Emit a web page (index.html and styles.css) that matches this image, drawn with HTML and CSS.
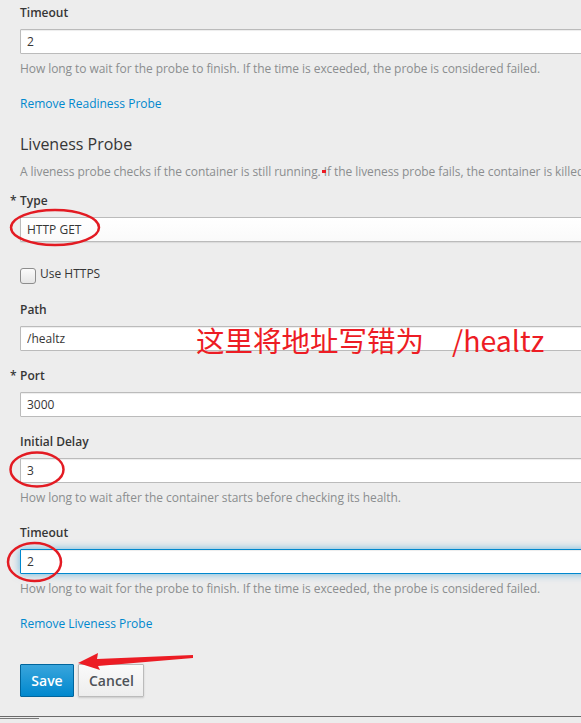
FILE: index.html
```html
<!DOCTYPE html>
<html>
<head>
<meta charset="utf-8">
<link rel="stylesheet" href="styles.css">
</head>
<body>
<div class="page">
  <form class="form">
    <div class="group">
      <label class="label">Timeout</label>
      <input class="control" type="text" value="2">
      <div class="help">How long to wait for the probe to finish. If the time is exceeded, the probe is considered failed.</div>
    </div>
    <div class="group">
      <a class="link" href="#">Remove Readiness Probe</a>
    </div>

    <h3 class="heading">Liveness Probe</h3>
    <div class="desc">A liveness probe checks if the container is still running. If the liveness probe fails, the container is killed.</div>

    <div class="group">
      <label class="label required">Type</label>
      <div class="control select">HTTP GET</div>
    </div>

    <div class="check-row">
      <span class="checkbox"></span>
      <span class="check-label">Use HTTPS</span>
    </div>

    <div class="group">
      <label class="label">Path</label>
      <input class="control" type="text" value="/healtz">
    </div>
    <div class="group">
      <label class="label required">Port</label>
      <input class="control" type="text" value="3000">
    </div>
    <div class="group">
      <label class="label">Initial Delay</label>
      <input class="control" type="text" value="3">
      <div class="help">How long to wait after the container starts before checking its health.</div>
    </div>
    <div class="group">
      <label class="label">Timeout</label>
      <input class="control focused" type="text" value="2">
      <div class="help">How long to wait for the probe to finish. If the time is exceeded, the probe is considered failed.</div>
    </div>
    <div class="group">
      <a class="link" href="#">Remove Liveness Probe</a>
    </div>

    <div class="buttons">
      <button type="button" class="btn primary">Save</button>
      <button type="button" class="btn default">Cancel</button>
    </div>
  </form>
  <div class="footer"><span class="footer-bar"></span></div>

  <div class="note">这里将地址写错为<span class="note-gap"></span>/healtz</div>
  <svg class="marks" width="581" height="723" viewBox="0 0 581 723">
    <ellipse cx="55" cy="227.5" rx="44" ry="17.5" fill="none" stroke="#e31b23" stroke-width="2.5"/>
    <ellipse cx="37" cy="469.5" rx="26.5" ry="17" fill="none" stroke="#e31b23" stroke-width="2.5"/>
    <ellipse cx="34.5" cy="562" rx="26.5" ry="19" fill="none" stroke="#e31b23" stroke-width="2.5"/>
    <polygon points="78,663 98,653 97,659 193,655 193,658 98,666 100,670" fill="#ec1c24"/>
    <rect x="322" y="170" width="4" height="3" fill="#ec1c24"/>
  </svg>
</div>
</body>
</html>
```

FILE: styles.css
```css
html, body {
  margin: 0;
  padding: 0;
}
body {
  background: #ededed;
  font-family: "Open Sans", "Noto Sans", sans-serif;
  font-size: 12px;
  color: #363636;
  overflow: hidden;
  width: 581px;
  height: 723px;
}
.page {
  position: relative;
  width: 581px;
  height: 723px;
  overflow: hidden;
}
.form {
  padding: 3px 0 0 20px;
  width: 640px;
  margin: 0;
}
.group {
  margin-bottom: 15px;
}
.label {
  display: block;
  font-weight: 600;
  line-height: 20px;
  margin-bottom: 6px;
}
.required::before {
  content: "*";
  display: inline-block;
  width: 10px;
  margin-left: -10px;
  font-weight: 600;
}
.control {
  display: block;
  box-sizing: border-box;
  width: 620px;
  height: 25px;
  margin: 0;
  padding: 2px 6px;
  border: 1px solid #bbbbbb;
  border-radius: 1px;
  background: #ffffff;
  font-family: "Open Sans", "Noto Sans", sans-serif;
  font-size: 12px;
  color: #363636;
  box-shadow: inset 0 1px 1px rgba(3, 3, 3, 0.075);
  outline: none;
}
.select {
  line-height: 19px;
  background: linear-gradient(#ffffff, #fafafa);
  box-shadow: 0 1px 1px rgba(3, 3, 3, 0.08);
}
.focused {
  border-color: #0088ce;
  box-shadow: inset 0 1px 1px rgba(3, 3, 3, 0.075), 0 0 8px rgba(0, 136, 206, 0.55);
}
.help {
  margin-top: 5px;
  line-height: 20px;
  color: #8b8d8f;
  white-space: nowrap;
  letter-spacing: -0.07px;
}
.link {
  display: inline-block;
  line-height: 20px;
  color: #0088ce;
  text-decoration: none;
}
.heading {
  margin: 19px 0 0;
  font-size: 16px;
  font-weight: 400;
  line-height: 22px;
  color: #363636;
}
.desc {
  margin: 7px 0 9px;
  line-height: 20px;
  color: #8b8d8f;
  white-space: nowrap;
  letter-spacing: -0.07px;
}
.check-row {
  display: flex;
  align-items: center;
  gap: 4px;
  height: 20px;
  margin: 22px 0 16px;
}
.checkbox {
  box-sizing: border-box;
  width: 16px;
  height: 16px;
  margin-top: 3px;
  border: 1px solid #8d8d8d;
  border-radius: 3px;
  background: linear-gradient(#fbfbfb, #e6e6e6);
}
.check-label {
  color: #363636;
  line-height: 20px;
  margin-bottom: 0;
}
.buttons {
  display: flex;
  gap: 4px;
  margin-top: 30px;
}
.btn {
  box-sizing: border-box;
  height: 33px;
  padding: 0 10px;
  font-family: "Open Sans", "Noto Sans", sans-serif;
  font-size: 14px;
  font-weight: 600;
  border-radius: 1px;
  cursor: pointer;
}
.primary {
  width: 54px;
  color: #ffffff;
  background: linear-gradient(#39a5dc, #0088ce);
  border: 1px solid #00659c;
}
.default {
  width: 66px;
  color: #4d5258;
  background: linear-gradient(#fafafa, #ededed);
  border: 1px solid #bbbbbb;
  box-shadow: 0 1px 2px rgba(3, 3, 3, 0.15);
}
.footer {
  position: absolute;
  left: 0;
  top: 716px;
  width: 581px;
  height: 7px;
  border-top: 1px solid #6a6a6a;
  background: #ececec;
}
.footer-bar {
  display: block;
  width: 39px;
  height: 0;
  margin-top: 1px;
  border-top: 1px solid #7a7a7a;
}
.note {
  position: absolute;
  left: 196px;
  top: 325px;
  font-family: "Noto Sans CJK SC", "Liberation Sans", sans-serif;
  font-size: 28.5px;
  line-height: 29px;
  color: #ed1c24;
  white-space: nowrap;
}
.note-gap {
  display: inline-block;
  width: 28px;
}
.marks {
  position: absolute;
  left: 0;
  top: 0;
  pointer-events: none;
}
```
